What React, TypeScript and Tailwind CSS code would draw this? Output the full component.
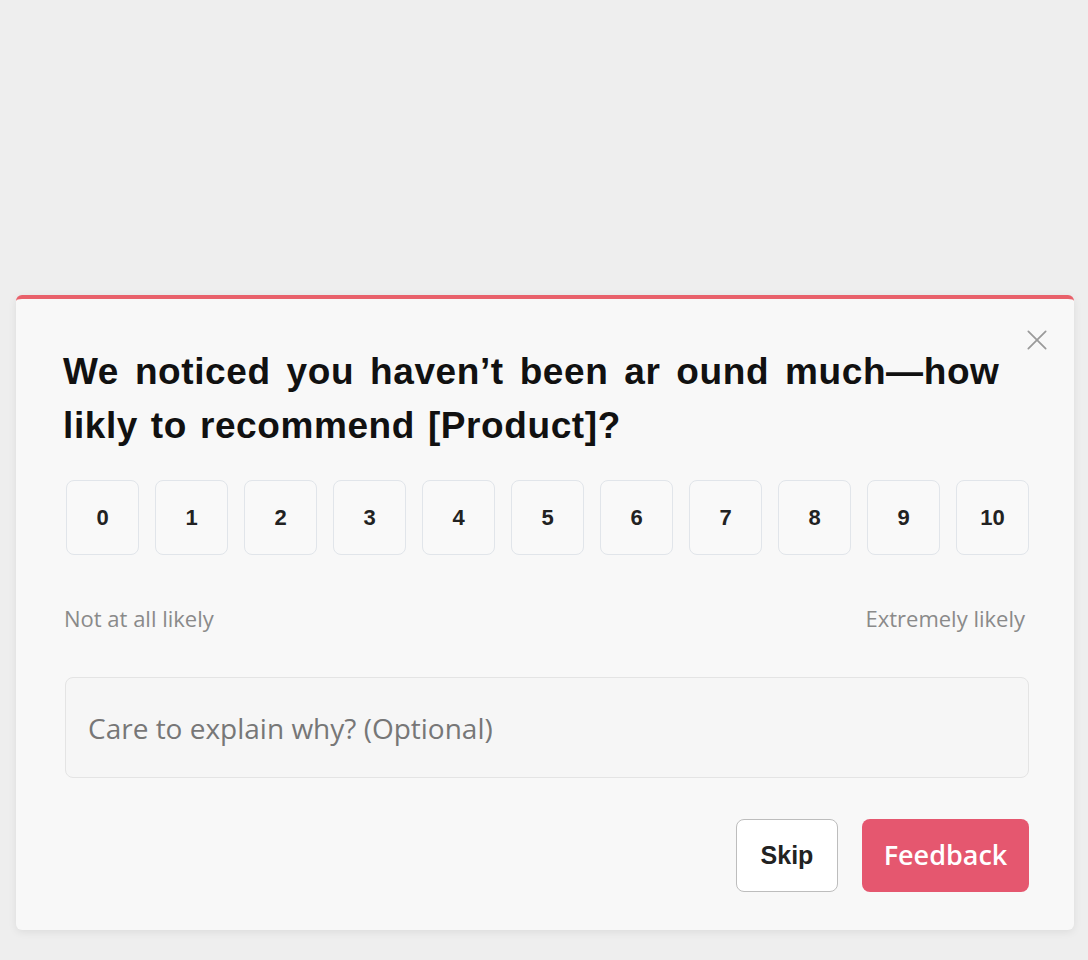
import React, { useState } from 'react';

const scores = [0, 1, 2, 3, 4, 5, 6, 7, 8, 9, 10];

const App: React.FC = () => {
  const [selected, setSelected] = useState<number | null>(null);
  const [reason, setReason] = useState('');

  return (
    <div className="min-h-[960px] w-full bg-[#eeeeee] pt-[295px] pl-4 pr-[14px]" style={{ fontFamily: '"Liberation Sans", Arial, sans-serif' }}>
      <div className="relative h-[635px] rounded-md border-t-4 border-[#e8606a] bg-[#f8f8f8] shadow-[0_2px_8px_rgba(0,0,0,0.08)] pl-[47px] pr-[45px] pt-[46px]">
        <button className="absolute right-[24px] top-[28px] text-[#9a9a9a]" aria-label="Close">
          <svg width="26" height="26" viewBox="0 0 24 24" fill="none" stroke="currentColor" strokeWidth="1.6" strokeLinecap="round">
            <path d="M4 4l16 16M20 4L4 20" />
          </svg>
        </button>

        <h2 className="text-[37px] font-bold leading-[54px] text-[#111] tracking-[0.6px]">
          <span className="[word-spacing:5px]">We noticed you haven’t been ar ound much—how</span>
          <br />
          <span className="[word-spacing:2px]">likly to recommend [Product]?</span>
        </h2>

        <div className="mt-[27px] flex gap-4 pl-[3px]">
          {scores.map(n => (
            <button
              key={n}
              onClick={() => setSelected(n)}
              className={`h-[75px] w-[73px] rounded-lg border text-[22px] font-bold text-[#222] ${selected === n ? 'border-[#e5576f] bg-[#fdecef]' : 'border-[#e1e5ea] bg-[#f9f9f9]'}`}
            >
              {n}
            </button>
          ))}
        </div>

        <div
          className="mt-[47px] flex justify-between pl-[1px] pr-[4px] text-[22px] text-[#8a8a8a]"
          style={{ fontFamily: '"Open Sans", sans-serif' }}
        >
          <span>Not at all likely</span>
          <span>Extremely likely</span>
        </div>

        <input
          value={reason}
          onChange={e => setReason(e.target.value)}
          placeholder="Care to explain why? (Optional)"
          style={{ fontFamily: '"Open Sans", sans-serif' }}
          className="mt-[42px] ml-[2px] block h-[101px] w-[964px] rounded-lg border border-[#e4e4e4] bg-[#f6f6f6] px-[22px] text-[28px] text-[#333] outline-none placeholder:text-[#777]"
        />

        <div className="mt-[41px] flex justify-end gap-6">
          <button className="h-[73px] w-[102px] rounded-lg border border-[#bdbdbd] bg-white text-[25px] font-bold text-[#222]">
            Skip
          </button>
          <button
            className="h-[73px] w-[167px] rounded-lg bg-[#e5576f] text-[27px] font-semibold text-white"
            style={{ fontFamily: '"Open Sans", sans-serif' }}
          >
            Feedback
          </button>
        </div>
      </div>
    </div>
  );
};

export default App;
